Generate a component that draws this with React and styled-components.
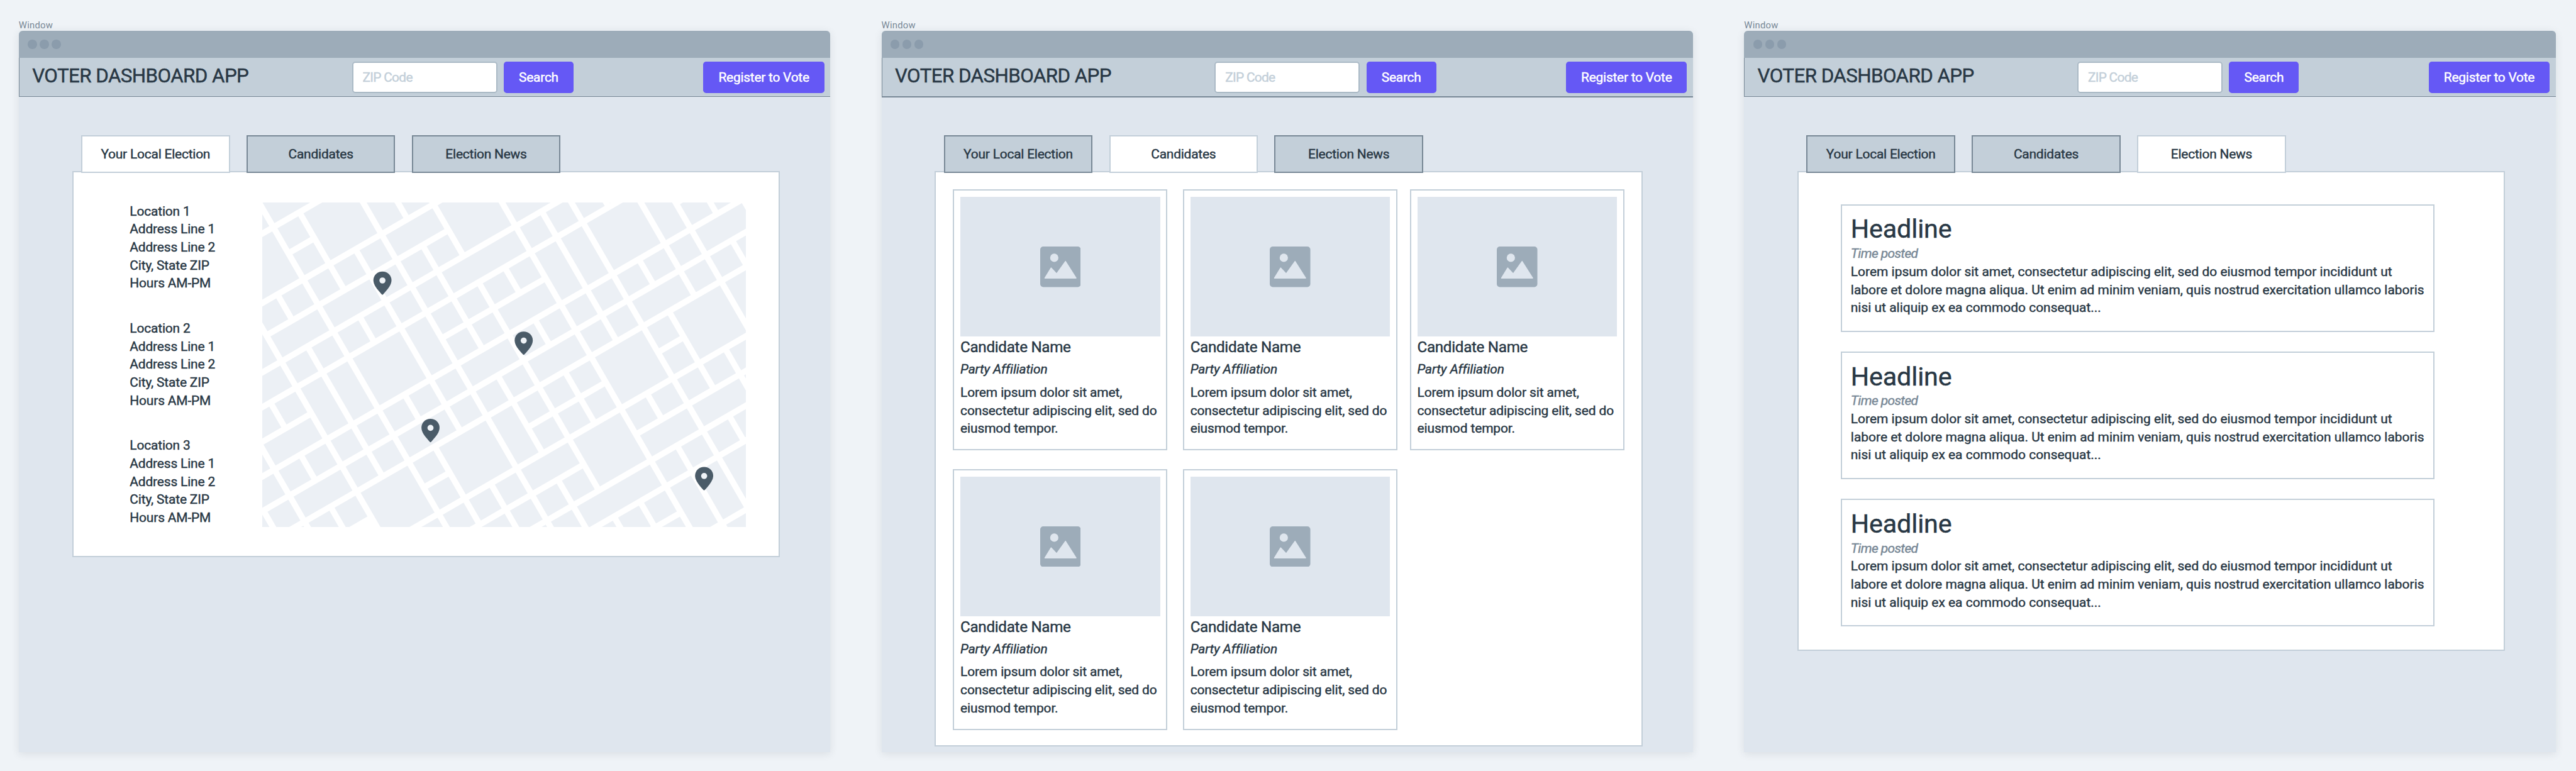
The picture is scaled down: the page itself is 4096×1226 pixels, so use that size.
import React from "react";
import styled, { createGlobalStyle, css } from "styled-components";

/* Design units: the board is 6856 units wide, 100 units = 1rem. */
const u = (n) => `${+(n / 100).toFixed(4)}rem`;

const c = {
  canvas: "#eff3f7",
  surface: "#dfe6ee",
  chrome: "#9dacb9",
  dot: "#8b9cac",
  bar: "#c3cfd9",
  line: "#788896",
  ink: "#293845",
  accent: "#6558f5",
  field: "#abbac6",
  tile: "#ecf0f5",
  pin: "#4a5b68",
  white: "#ffffff",
};

const GlobalStyle = createGlobalStyle`
  html { font-size: calc(100vw / 68.56); }
  *, *::before, *::after { box-sizing: border-box; }
  body {
    margin: 0;
    background: ${c.canvas};
    color: ${c.ink};
    font-family: Roboto, "Open Sans", "Liberation Sans", sans-serif;
    overflow: hidden;
  }
`;

/* Sits between the regular and medium cuts of the typeface. */
const sturdy = css`
  font-weight: 400;
  -webkit-text-stroke: ${u(0.75)} currentColor;
`;

const Board = styled.main`
  display: flex;
  align-items: flex-start;
  gap: ${u(136)};
  height: 100vh;
  padding: ${u(53.6)} ${u(50)} 0;
`;

const Frame = styled.section`
  flex: none;
  width: ${u(2160)};
`;

const FrameLabel = styled.div`
  height: ${u(28.4)};
  font-size: ${u(24.8)};
  line-height: ${u(28)};
  letter-spacing: ${u(0.4)};
  color: ${c.line};
`;

const AppWindow = styled.div`
  display: flex;
  flex-direction: column;
  height: ${u(1920)};
  border-radius: ${u(10)} ${u(10)} 0 0;
  background: ${c.surface};
  box-shadow: 0 ${u(4)} ${u(22)} rgba(40, 50, 60, 0.1);
`;

const ChromeBar = styled.div`
  display: flex;
  align-items: center;
  gap: ${u(8)};
  flex: none;
  height: ${u(72)};
  padding-left: ${u(24)};
  border-radius: ${u(10)} ${u(10)} 0 0;
  background: ${c.chrome};
`;

const Dot = styled.span`
  width: ${u(24)};
  height: ${u(24)};
  border-radius: 50%;
  background: ${c.dot};
`;

const Header = styled.header`
  display: flex;
  align-items: flex-start;
  flex: none;
  height: ${(p) => u(p.$heavy ? 106 : 104)};
  margin-bottom: ${(p) => u(p.$heavy ? -2 : 0)};
  padding: ${u(10)} ${u(16)} 0 ${u(34)};
  border: solid ${c.line};
  border-width: 0 0 ${(p) => u(p.$heavy ? 4 : 2)} ${u(2)};
  background: ${c.bar};
`;

const AppTitle = styled.h1`
  ${sturdy}
  width: ${u(851)};
  margin: 0;
  font-size: ${u(52.5)};
  line-height: ${u(76)};
  letter-spacing: ${u(-0.98)};
  white-space: nowrap;
`;

const ZipField = styled.input`
  width: ${u(387)};
  height: ${u(84)};
  margin-right: ${u(17)};
  padding: 0 ${u(25)};
  border: ${u(4)} solid ${c.field};
  border-radius: ${u(8)};
  background: ${c.white};
  font: 400 ${u(35)} Roboto, sans-serif;
  ${sturdy}
  letter-spacing: ${u(-1.2)};
  outline: none;

  &::placeholder {
    color: ${c.bar};
    opacity: 1;
  }
`;

const Button = styled.button`
  width: ${(p) => u(p.$wide ? 322 : 186)};
  height: ${u(84)};
  margin-left: ${(p) => (p.$wide ? "auto" : 0)};
  padding: 0;
  border: 0;
  border-radius: ${u(8)};
  background: ${c.accent};
  color: ${c.white};
  font: 400 ${u(35)} Roboto, sans-serif;
  ${sturdy}
  letter-spacing: ${u(-0.4)};
`;

const Content = styled.div`
  padding: ${u(102)} 0 0 ${u(142)};
`;

const Tabs = styled.nav`
  position: relative;
  z-index: 1;
  display: flex;
  gap: ${u(44)};
  height: ${u(100)};
  margin: 0 0 ${u(-4)} ${u(24)};
`;

const Tab = styled.button`
  width: ${u(396)};
  padding: 0;
  border: ${u(4)} solid ${(p) => (p.$active ? c.bar : c.line)};
  background: ${(p) => (p.$active ? c.white : c.bar)};
  color: ${c.ink};
  font: 400 ${u(35)} Roboto, sans-serif;
  ${sturdy}
  letter-spacing: ${u(-0.35)};
`;

const Panel = styled.div`
  width: ${u(1883.5)};
  border: ${u(4)} solid ${c.bar};
  background: ${c.white};
`;

const ElectionPanel = styled(Panel)`
  display: flex;
  height: ${u(1027)};
  padding: ${u(79)} 0 0 ${u(150)};
`;

const Locations = styled.div`
  display: flex;
  flex-direction: column;
  gap: ${u(72)};
  width: ${u(352.6)};
`;

const copy = css`
  ${sturdy}
  margin: 0;
  font-size: ${u(35)};
  line-height: ${u(48)};
  white-space: pre-line;
`;

const Location = styled.address`
  ${copy}
  font-style: normal;
  letter-spacing: ${u(-0.25)};
`;

const MapView = styled.svg`
  display: block;
  flex: none;
  width: ${u(1288)};
  height: ${u(864)};
`;

const CandidatesPanel = styled(Panel)`
  display: grid;
  grid-template-columns: ${u(571)} ${u(571)} ${u(571)};
  grid-template-rows: ${u(695)} ${u(695)};
  row-gap: ${u(49)};
  column-gap: ${u(37)};
  height: ${u(1531.6)};
  padding: ${u(45)} 0 0 ${u(44.7)};
`;

const Card = styled.article`
  margin: 0 ${(p) => u(p.$shift ? -4 : 0)} 0 ${(p) => u(p.$shift ? 4 : 0)};
  padding: ${u(16.7)} 0 0 ${u(16.7)};
  border: ${u(4)} solid ${c.bar};
`;

const Photo = styled.div`
  display: flex;
  align-items: center;
  justify-content: center;
  width: ${u(532)};
  height: ${u(372)};
  background: ${c.surface};
`;

const PhotoIcon = styled.svg`
  width: ${u(108)};
  height: ${u(108)};
`;

const Name = styled.h2`
  ${sturdy}
  margin: ${u(1.6)} 0 0;
  font-size: ${u(40.5)};
  line-height: ${u(56)};
  letter-spacing: ${u(-0.5)};
`;

const Party = styled.p`
  ${copy}
  margin-top: ${u(6)};
  font-style: italic;
  letter-spacing: ${u(-0.15)};
`;

const Bio = styled.p`
  ${copy}
  margin-top: ${u(13)};
  letter-spacing: ${u(-0.17)};
`;

const NewsPanel = styled(Panel)`
  display: flex;
  flex-direction: column;
  gap: ${u(52)};
  height: ${u(1276)};
  padding: ${u(84.6)} 0 0 ${u(112.6)};
`;

const Story = styled.article`
  flex: none;
  width: ${u(1580)};
  height: ${u(340)};
  padding: ${u(24.2)} 0 0 ${u(22.5)};
  border: ${u(4)} solid ${c.bar};
`;

const Headline = styled.h2`
  ${sturdy}
  margin: 0;
  font-size: ${u(69)};
  line-height: ${u(80)};
  letter-spacing: ${u(-0.2)};
`;

const Posted = styled.time`
  ${copy}
  display: block;
  color: ${c.line};
  font-style: italic;
  letter-spacing: ${u(-0.95)};
`;

const Excerpt = styled.p`
  ${copy}
  letter-spacing: ${u(0.03)};
`;

/* City blocks on a tilted 80-unit street grid: [column, row, columns, rows] */
const BLOCKS = [
  [-2, 0, 2, 2], [0, 0, 1, 1], [1, 0, 2, 2], [-1, -1, 1, 1], [0, -1, 2, 1], [3, 0, 1, 2], [4, 1, 1, 1],
  [0, 1, 1, 1], [-3, 2, 1, 2], [-2, 2, 1, 1], [-1, 2, 1, 1], [0, 2, 1, 1], [1, 2, 1, 1], [2, 2, 1, 1],
  [3, 2, 2, 1], [5, 2, 2, 2], [7, 3, 2, 1],
  [-2, 3, 2, 1], [0, 3, 2, 1], [2, 3, 1, 1], [3, 3, 1, 1], [4, 3, 1, 1],
  [-4, 4, 2, 1], [-2, 4, 1, 1], [-1, 4, 1, 1], [0, 4, 1, 1], [1, 4, 1, 1], [2, 4, 1, 1], [3, 4, 1, 1],
  [4, 4, 3, 1], [7, 4, 1, 1], [8, 4, 1, 1], [9, 4, 1, 1], [10, 4, 1, 1],
  [-4, 5, 1, 1], [-3, 5, 1, 1], [-2, 5, 1, 2], [-1, 5, 1, 2], [0, 5, 2, 2], [2, 5, 1, 2], [3, 5, 1, 1],
  [4, 5, 1, 1], [5, 5, 1, 1], [6, 5, 1, 1], [7, 5, 1, 2], [8, 5, 1, 2], [9, 5, 2, 2], [11, 5, 1, 2],
  [-4, 6, 2, 1], [-5, 6, 1, 1], [3, 6, 1, 1], [4, 6, 1, 1], [5, 6, 2, 1], [12, 6, 1, 1], [13, 6, 1, 1],
  [-6, 7, 2, 1], [-4, 7, 1, 1], [-3, 7, 1, 1], [-2, 7, 1, 1], [-1, 7, 1, 1], [0, 7, 1, 1], [1, 7, 1, 1],
  [2, 7, 1, 1], [3, 7, 2, 1], [5, 7, 1, 1], [6, 7, 1, 1], [7, 7, 1, 1], [8, 7, 1, 1], [9, 7, 1, 1],
  [10, 7, 1, 1], [11, 7, 1, 1], [12, 7, 2, 1],
  [-6, 8, 1, 1], [-5, 8, 1, 1], [-4, 8, 2, 1], [-2, 8, 1, 1], [-1, 8, 1, 1], [0, 8, 2, 1], [2, 8, 1, 1],
  [3, 8, 1, 1], [4, 8, 1, 1], [5, 8, 2, 1], [7, 8, 1, 1], [8, 8, 1, 1], [9, 8, 2, 1], [11, 8, 1, 1],
  [12, 8, 1, 1], [13, 8, 1, 1],
  [-5, 9, 1, 1], [-4, 9, 1, 1], [-3, 9, 1, 1], [-2, 9, 2, 2], [0, 9, 1, 1], [1, 9, 2, 2], [3, 9, 1, 2],
  [4, 9, 1, 1], [5, 9, 1, 1], [6, 9, 1, 1], [7, 9, 2, 2], [9, 9, 1, 1], [10, 9, 2, 2], [12, 9, 2, 2],
  [0, 10, 1, 1], [4, 10, 1, 1], [5, 10, 1, 1], [6, 10, 1, 1], [9, 10, 1, 1],
  [-1, 11, 1, 1], [0, 11, 1, 1], [1, 11, 1, 1], [2, 11, 1, 1], [3, 11, 2, 1], [5, 11, 2, 2], [7, 11, 1, 1],
  [8, 11, 1, 1], [9, 11, 1, 1], [10, 11, 1, 1], [11, 11, 1, 1],
  [0, 12, 2, 1], [2, 12, 1, 1], [3, 12, 1, 1], [4, 12, 1, 1], [7, 12, 2, 1], [9, 12, 2, 1], [11, 12, 1, 1],
  [2, 13, 1, 1], [3, 13, 1, 1], [4, 13, 3, 1], [7, 13, 1, 1], [8, 13, 1, 1], [9, 13, 1, 1], [10, 13, 1, 1],
  [4, 14, 1, 1], [5, 14, 1, 1], [6, 14, 1, 1], [7, 14, 1, 2], [8, 14, 1, 2], [9, 14, 2, 2],
  [6, 15, 1, 1], [8, 16, 1, 1],
];

const PINS = [[295.8, 183.5], [671.8, 343.5], [423.7, 576], [1152, 704]];

const CityMap = () => (
  <MapView viewBox="0 0 1288 864" role="img" aria-label="Polling locations">
    <g transform="translate(29.5 65.9) rotate(-30)" fill={c.tile}>
      {BLOCKS.map(([x, y, w, h]) => (
        <rect key={`${x}:${y}`} x={x * 80 + 8} y={y * 80 + 8} width={w * 80 - 16} height={h * 80 - 16} />
      ))}
    </g>
    {PINS.map(([x, y]) => (
      <g key={x} transform={`translate(${x} ${y})`}>
        <path
          d="M24 0C10.6 0 0 10.2 0 23.4C0 35.5 9.5 47.5 22.3 61.2Q24 62.8 25.7 61.2C38.5 47.5 48.2 35.5 48.2 23.4C48.2 10.2 37.4 0 24 0Z"
          fill={c.pin}
        />
        <circle cx="24.1" cy="24" r="8.1" fill={c.canvas} />
      </g>
    ))}
  </MapView>
);

const ImageGlyph = () => (
  <PhotoIcon viewBox="0 0 108 108" aria-hidden="true">
    <rect width="108" height="108" rx="8" fill={c.chrome} />
    <circle cx="37.4" cy="30" r="11" fill={c.surface} />
    <path
      d="M12.5 84L28.9 57L43.6 72.5L67.3 39.5L95.5 84Z"
      fill={c.surface}
      stroke={c.surface}
      strokeWidth="2.4"
      strokeLinejoin="round"
    />
  </PhotoIcon>
);

const TABS = ["Your Local Election", "Candidates", "Election News"];

const VoterWindow = ({ active, heavy, children }) => (
  <Frame>
    <FrameLabel>Window</FrameLabel>
    <AppWindow>
      <ChromeBar>
        <Dot />
        <Dot />
        <Dot />
      </ChromeBar>
      <Header $heavy={heavy}>
        <AppTitle>VOTER DASHBOARD APP</AppTitle>
        <ZipField placeholder="ZIP Code" />
        <Button>Search</Button>
        <Button $wide>Register to Vote</Button>
      </Header>
      <Content>
        <Tabs>
          {TABS.map((t) => (
            <Tab key={t} $active={t === active}>{t}</Tab>
          ))}
        </Tabs>
        {children}
      </Content>
    </AppWindow>
  </Frame>
);

export default function App() {
  return (
    <>
      <GlobalStyle />
      <Board>
        <VoterWindow active="Your Local Election">
          <ElectionPanel>
            <Locations>
              {[1, 2, 3].map((n) => (
                <Location key={n}>
                  {`Location ${n}\nAddress Line 1\nAddress Line 2\nCity, State ZIP\nHours AM-PM`}
                </Location>
              ))}
            </Locations>
            <CityMap />
          </ElectionPanel>
        </VoterWindow>

        <VoterWindow active="Candidates" heavy>
          <CandidatesPanel>
            {[0, 1, 2, 3, 4].map((n) => (
              <Card key={n} $shift={n % 3 === 1}>
                <Photo>
                  <ImageGlyph />
                </Photo>
                <Name>Candidate Name</Name>
                <Party>Party Affiliation</Party>
                <Bio>{"Lorem ipsum dolor sit amet,\nconsectetur adipiscing elit, sed do\neiusmod tempor."}</Bio>
              </Card>
            ))}
          </CandidatesPanel>
        </VoterWindow>

        <VoterWindow active="Election News">
          <NewsPanel>
            {[0, 1, 2].map((n) => (
              <Story key={n}>
                <Headline>Headline</Headline>
                <Posted>Time posted</Posted>
                <Excerpt>
                  {"Lorem ipsum dolor sit amet, consectetur adipiscing elit, sed do eiusmod tempor incididunt ut\nlabore et dolore magna aliqua. Ut enim ad minim veniam, quis nostrud exercitation ullamco laboris\nnisi ut aliquip ex ea commodo consequat..."}
                </Excerpt>
              </Story>
            ))}
          </NewsPanel>
        </VoterWindow>
      </Board>
    </>
  );
}
